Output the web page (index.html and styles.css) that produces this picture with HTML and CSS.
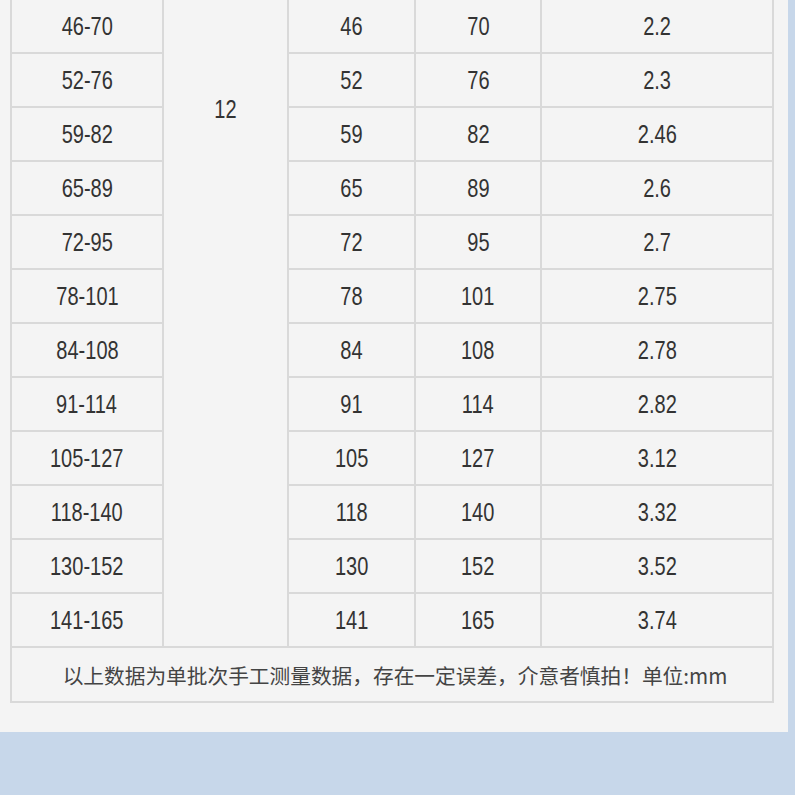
FILE: index.html
```html
<!DOCTYPE html>
<html lang="zh-CN">
<head>
<meta charset="utf-8">
<title>尺码表</title>
<link rel="stylesheet" href="styles.css">
</head>
<body>
<div class="frame">
  <div class="card">
    <div class="sheet">
      <div class="cell"><span class="n">46-70</span></div>
      <div class="cell merged"><span class="n">12</span></div>
      <div class="cell"><span class="n">46</span></div><div class="cell"><span class="n">70</span></div><div class="cell"><span class="n">2.2</span></div>

      <div class="cell"><span class="n">52-76</span></div><div class="cell"><span class="n">52</span></div><div class="cell"><span class="n">76</span></div><div class="cell"><span class="n">2.3</span></div>
      <div class="cell"><span class="n">59-82</span></div><div class="cell"><span class="n">59</span></div><div class="cell"><span class="n">82</span></div><div class="cell"><span class="n">2.46</span></div>
      <div class="cell"><span class="n">65-89</span></div><div class="cell"><span class="n">65</span></div><div class="cell"><span class="n">89</span></div><div class="cell"><span class="n">2.6</span></div>
      <div class="cell"><span class="n">72-95</span></div><div class="cell"><span class="n">72</span></div><div class="cell"><span class="n">95</span></div><div class="cell"><span class="n">2.7</span></div>
      <div class="cell"><span class="n">78-101</span></div><div class="cell"><span class="n">78</span></div><div class="cell"><span class="n">101</span></div><div class="cell"><span class="n">2.75</span></div>
      <div class="cell"><span class="n">84-108</span></div><div class="cell"><span class="n">84</span></div><div class="cell"><span class="n">108</span></div><div class="cell"><span class="n">2.78</span></div>
      <div class="cell"><span class="n">91-114</span></div><div class="cell"><span class="n">91</span></div><div class="cell"><span class="n">114</span></div><div class="cell"><span class="n">2.82</span></div>
      <div class="cell"><span class="n">105-127</span></div><div class="cell"><span class="n">105</span></div><div class="cell"><span class="n">127</span></div><div class="cell"><span class="n">3.12</span></div>
      <div class="cell"><span class="n">118-140</span></div><div class="cell"><span class="n">118</span></div><div class="cell"><span class="n">140</span></div><div class="cell"><span class="n">3.32</span></div>
      <div class="cell"><span class="n">130-152</span></div><div class="cell"><span class="n">130</span></div><div class="cell"><span class="n">152</span></div><div class="cell"><span class="n">3.52</span></div>
      <div class="cell"><span class="n">141-165</span></div><div class="cell"><span class="n">141</span></div><div class="cell"><span class="n">165</span></div><div class="cell"><span class="n">3.74</span></div>

      <div class="note">以上数据为单批次手工测量数据，存在一定误差，介意者慎拍！单位:mm</div>
    </div>
  </div>
</div>
</body>
</html>
```

FILE: styles.css
```css
html, body {
  margin: 0;
  padding: 0;
  background: #ffffff;
}

.frame {
  width: 795px;
  height: 795px;
  background: #c7d7ea;
  overflow: hidden;
}

.card {
  width: 788px;
  height: 732px;
  background: #f4f4f4;
  overflow: hidden;
}

.sheet {
  display: grid;
  grid-template-columns: 150px 123px 125px 124px 230px;
  grid-template-rows: repeat(12, 52px) 53px;
  gap: 2px;
  padding: 2px;
  width: max-content;
  margin: -2px 0 0 10px;
  background: #d9d9d9;
}

.cell {
  background: #f4f4f4;
  display: flex;
  align-items: center;
  justify-content: center;
  font-family: "Liberation Sans", sans-serif;
  font-size: 26px;
  color: #333333;
}

.n {
  display: inline-block;
  transform: scaleX(0.77);
}

.merged {
  grid-column: 2;
  grid-row: 1 / span 12;
  align-items: flex-start;
  padding-top: 83px;
  line-height: 52px;
}

.note {
  grid-column: 1 / -1;
  background: #f4f4f4;
  display: flex;
  align-items: center;
  justify-content: center;
  padding-left: 6px;
  font-family: "Noto Sans CJK SC", "Noto Sans", sans-serif;
  font-size: 20.7px;
  color: #444444;
}
```
